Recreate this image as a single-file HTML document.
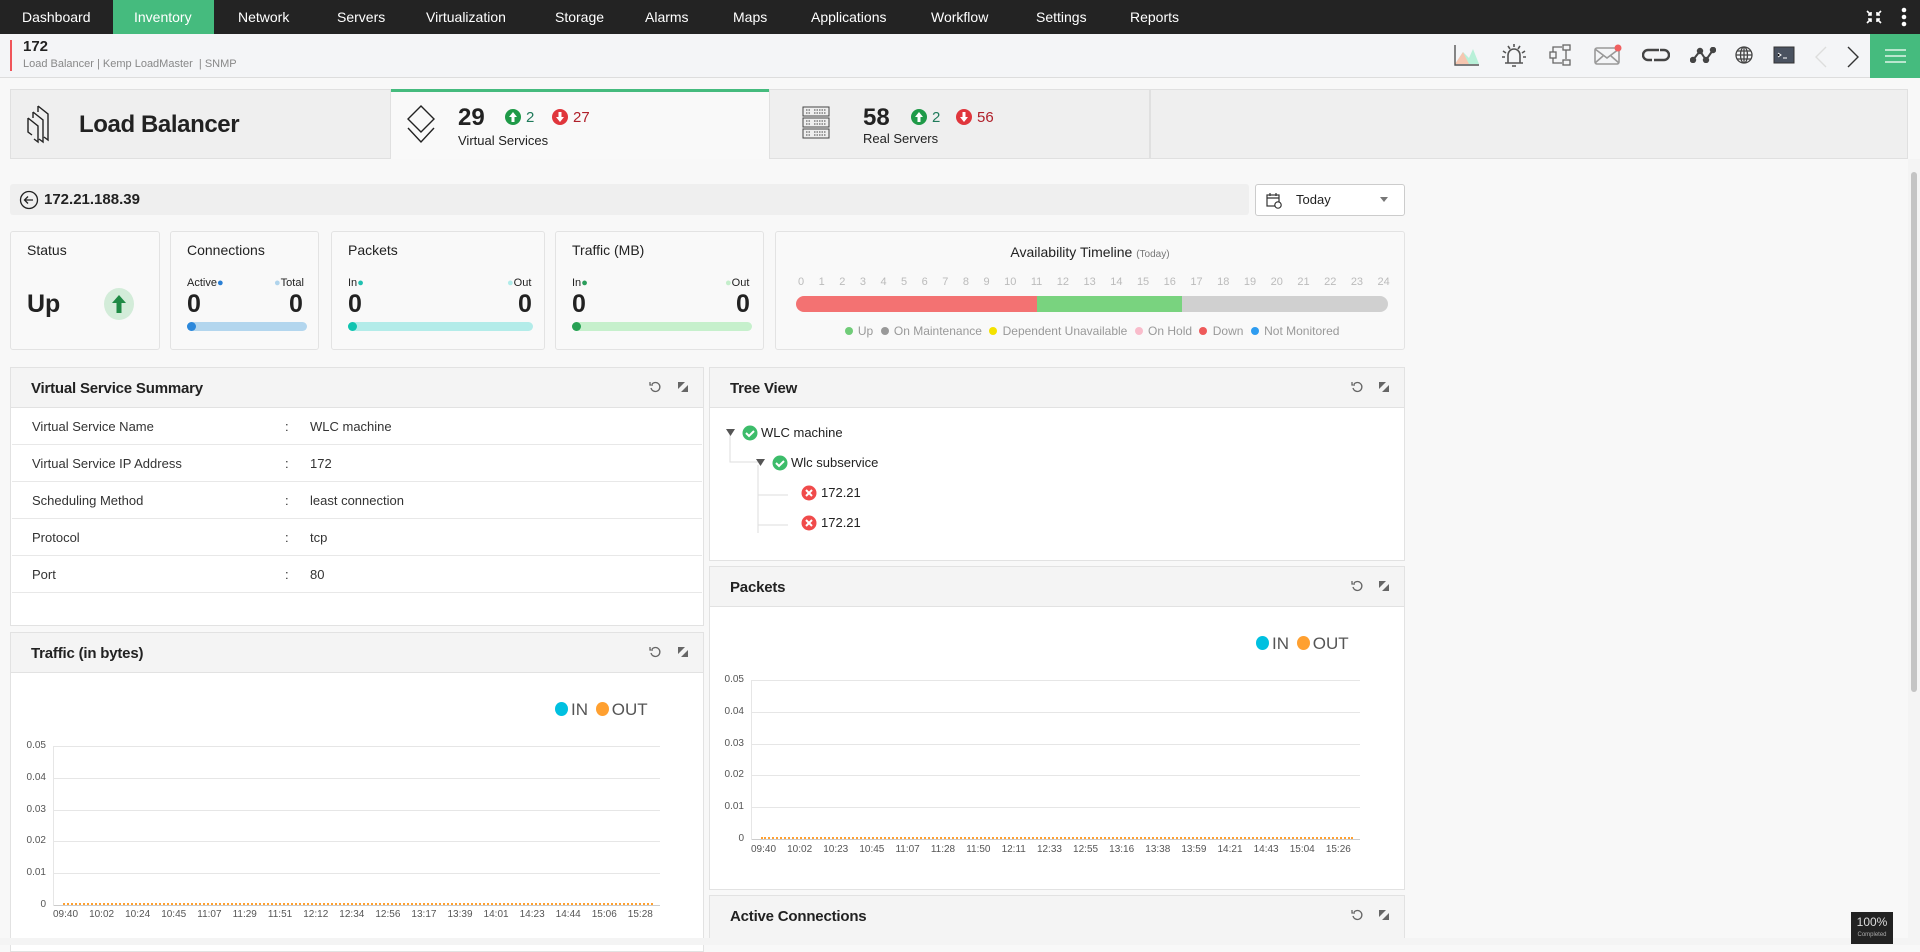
<!DOCTYPE html>
<html><head><meta charset="utf-8"><style>
*{box-sizing:border-box;margin:0;padding:0}
body{width:1920px;height:945px;overflow:hidden;background:#f8f8f8;font-family:"Liberation Sans",sans-serif;color:#222;position:relative}
.a{position:absolute}
.nav{left:0;top:0;width:1920px;height:34px;background:#232323}
.nav span{position:absolute;top:0;height:34px;line-height:34px;color:#fff;font-size:14px}
.sub{left:0;top:34px;width:1920px;height:44px;background:#f4f5f7;border-bottom:1px solid #ddd}
.box{background:#f9f9f9;border:1px solid #e3e3e3;border-radius:3px}
.ph{background:#f4f4f4;border:1px solid #e2e2e2}
.pt{position:absolute;left:20px;top:12px;font-size:15px;font-weight:bold;color:#222;letter-spacing:-0.2px}
.pico{position:absolute;top:13px;width:12px;height:12px}
.row{position:absolute;left:2px;right:2px;height:37px;border-bottom:1px solid #e8e8e8;font-size:13px;line-height:37px;color:#333}
.yl{position:absolute;font-size:10px;color:#555;text-align:right;width:30px}
.xl{position:absolute;font-size:10px;color:#555}
.gl{position:absolute;height:1px;background:#e6e6e6}
.dot{display:inline-block;border-radius:50%;vertical-align:middle}
.lg .dot{width:13px;height:14px;margin:0 3px 3px 0}
.al .dot{width:8px;height:8px;margin:0 2px 2px 4px}
</style></head><body>
<div class="a nav">
<span style="left:22px">Dashboard</span>
<div class="a" style="left:113px;top:0;width:101px;height:34px;background:#45bb7e"></div>
<span style="left:134px">Inventory</span>
<span style="left:238px">Network</span>
<span style="left:337px">Servers</span>
<span style="left:426px">Virtualization</span>
<span style="left:555px">Storage</span>
<span style="left:645px">Alarms</span>
<span style="left:733px">Maps</span>
<span style="left:811px">Applications</span>
<span style="left:931px">Workflow</span>
<span style="left:1036px">Settings</span>
<span style="left:1130px">Reports</span>
<svg class="a" style="left:1866px;top:10px" width="16" height="14" viewBox="0 0 16 14" stroke="#fff" stroke-width="1.6" fill="none"><path d="M1 1l4 4M5 2v3H2M15 1l-4 4M11 2v3h3M1 13l4-4M2 9h3v3M15 13l-4-4M14 9h-3v3"/></svg>
<svg class="a" style="left:1900px;top:7px" width="8" height="20"><circle cx="4" cy="3" r="2.3" fill="#fff"/><circle cx="4" cy="10" r="2.3" fill="#fff"/><circle cx="4" cy="17" r="2.3" fill="#fff"/></svg>
</div>
<div class="a sub">
<div class="a" style="left:10px;top:6px;width:2px;height:31px;background:#f0555a"></div>
<div class="a" style="left:23px;top:4px;font-size:15px;font-weight:bold">172</div>
<div class="a" style="left:23px;top:24px;font-size:11px;color:#888">Load Balancer | Kemp LoadMaster &nbsp;| SNMP</div>
<svg class="a" style="left:1454px;top:10px" width="26" height="22"><path d="M1 20L9 8l6 6 4-9 6 15z" fill="#b8f0d8"/><path d="M1 20L9 8l6 12z" fill="#f6c6b0"/><path d="M1 1v20h24" stroke="#555" stroke-width="1.4" fill="none"/></svg>
<svg class="a" style="left:1500px;top:9px" width="28" height="26" stroke="#555" stroke-width="1.6" fill="none"><path d="M8 20V12a6 6 0 0112 0v8M5 20h18M12 23h4M3 8l3 2M25 8l-3 2M2 14h3M23 14h3M8 3l2 3M20 3l-2 3M14 1v3"/></svg>
<svg class="a" style="left:1549px;top:10px" width="22" height="22" stroke="#666" stroke-width="1.3" fill="none"><rect x="1" y="8" width="6" height="6"/><rect x="14" y="1" width="7" height="5"/><rect x="14" y="16" width="7" height="5"/><path d="M4 8V3h9M4 14v5h9M17 6v9"/></svg>
<svg class="a" style="left:1594px;top:10px" width="28" height="22" stroke="#999" stroke-width="1.6" fill="none"><rect x="1" y="4" width="24" height="16" rx="2"/><path d="M1 5l12 9 12-9M1 19l8-7M25 19l-8-7"/><circle cx="24" cy="4" r="3.5" fill="#f06060" stroke="none"/></svg>
<svg class="a" style="left:1642px;top:14px" width="28" height="14" stroke="#444" stroke-width="2.4" fill="none"><path d="M10 2H6a5 5 0 000 10h4M18 12h4a5 5 0 000-10h-4M9 2h8M12 12h8"/></svg>
<svg class="a" style="left:1690px;top:13px" width="26" height="16" stroke="#444" stroke-width="2" fill="#444"><path d="M3 13l7-9 6 9 7-10" fill="none"/><circle cx="3" cy="13" r="2.2"/><circle cx="10" cy="4" r="2.2"/><circle cx="16" cy="13" r="2.2"/><circle cx="23" cy="3" r="2.2"/></svg>
<svg class="a" style="left:1735px;top:12px" width="18" height="18" stroke="#444" stroke-width="1.3" fill="none"><circle cx="9" cy="9" r="8"/><ellipse cx="9" cy="9" rx="3.5" ry="8"/><path d="M1 9h16M2 5h14M2 13h14M9 1v16"/></svg>
<svg class="a" style="left:1773px;top:12px" width="22" height="18"><rect x="1" y="1" width="20" height="16" fill="#4a5260" stroke="#333"/><path d="M5 7l3 2-3 2M10 12h4" stroke="#fff" stroke-width="1"/></svg>
<svg class="a" style="left:1815px;top:12px" width="12" height="22" stroke="#ddd" stroke-width="1.4" fill="none"><path d="M11 1L1 11l10 10"/></svg>
<svg class="a" style="left:1847px;top:12px" width="12" height="22" stroke="#333" stroke-width="1.4" fill="none"><path d="M1 1l10 10L1 21"/></svg>
<div class="a" style="left:1870px;top:0;width:50px;height:44px;background:#45bb7e"></div>
<svg class="a" style="left:1885px;top:15px" width="21" height="14" stroke="#fff" stroke-width="1.3"><path d="M0 1h21M0 7h21M0 13h21"/></svg>
</div>

<!-- tabs -->
<div class="a" style="left:10px;top:89px;width:381px;height:70px;background:#efefef;border:1px solid #e0e0e0"></div>
<svg class="a" style="left:26px;top:104px" width="34" height="40" stroke="#222" stroke-width="1.4" fill="none"><path d="M12 2l10 8v26l-4-3M7 8l10 8v22l-4-3M2 14l10 8v16L8 35M2 14v14l4 3M12 2v6M7 8v6"/></svg>
<div class="a" style="left:79px;top:111px;font-size:24px;font-weight:bold;color:#222;letter-spacing:-0.4px">Load Balancer</div>
<div class="a" style="left:391px;top:89px;width:378px;height:70px;background:#f9f9f9;border-top:3px solid #45bb7e"></div>
<svg class="a" style="left:406px;top:104px" width="30" height="42" stroke="#222" stroke-width="1.4" fill="none"><path d="M15 2l13 13-13 13L2 15zM2 24l13 14 13-14"/></svg>
<div class="a" style="left:458px;top:104px;font-size:24px;font-weight:bold">29</div>
<svg class="a" style="left:505px;top:109px" width="16" height="16"><circle cx="8" cy="8" r="8" fill="#1f9a48"/><path d="M8 3l4 5H9.5v5h-3V8H4z" fill="#fff"/></svg>
<div class="a" style="left:526px;top:109px;font-size:15px;color:#1f7a5a">2</div>
<svg class="a" style="left:552px;top:109px" width="16" height="16"><circle cx="8" cy="8" r="8" fill="#e0363c"/><path d="M8 13l4-5H9.5V3h-3v5H4z" fill="#fff"/></svg>
<div class="a" style="left:573px;top:109px;font-size:15px;color:#b0202a">27</div>
<div class="a" style="left:458px;top:133px;font-size:13px">Virtual Services</div>
<div class="a" style="left:769px;top:89px;width:381px;height:70px;background:#efefef;border:1px solid #e0e0e0"></div>
<svg class="a" style="left:802px;top:106px" width="28" height="34" stroke="#444" stroke-width="1" fill="none"><rect x="1" y="1" width="26" height="9"/><rect x="1" y="12" width="26" height="9"/><rect x="1" y="23" width="26" height="9"/><path d="M4 4h4M4 7h4M4 15h4M4 18h4M4 26h4M4 29h4M12 4h12M12 7h12M12 15h12M12 18h12M12 26h12M12 29h12" stroke-dasharray="1.5 1"/></svg>
<div class="a" style="left:863px;top:104px;font-size:24px;font-weight:bold">58</div>
<svg class="a" style="left:911px;top:109px" width="16" height="16"><circle cx="8" cy="8" r="8" fill="#1f9a48"/><path d="M8 3l4 5H9.5v5h-3V8H4z" fill="#fff"/></svg>
<div class="a" style="left:932px;top:109px;font-size:15px;color:#1f7a5a">2</div>
<svg class="a" style="left:956px;top:109px" width="16" height="16"><circle cx="8" cy="8" r="8" fill="#e0363c"/><path d="M8 13l4-5H9.5V3h-3v5H4z" fill="#fff"/></svg>
<div class="a" style="left:977px;top:109px;font-size:15px;color:#b0202a">56</div>
<div class="a" style="left:863px;top:131px;font-size:13px">Real Servers</div>
<div class="a" style="left:1150px;top:89px;width:758px;height:70px;background:#efefef;border:1px solid #e0e0e0"></div>

<!-- scrollbar -->
<div class="a" style="left:1908px;top:159px;width:12px;height:786px;background:#f4f4f4"></div>
<div class="a" style="left:1911px;top:172px;width:6px;height:520px;background:#c4c4c4;border-radius:3px"></div>

<!-- ip bar -->
<div class="a" style="left:10px;top:184px;width:1239px;height:31px;background:#efefef;border-radius:3px"></div>
<svg class="a" style="left:19px;top:190px" width="20" height="20" stroke="#222" stroke-width="1.3" fill="none"><circle cx="10" cy="10" r="8.5"/><path d="M14 10H6M9 6.5L5.5 10 9 13.5"/></svg>
<div class="a" style="left:44px;top:191px;font-size:15px;font-weight:bold">172.21.188.39</div>
<div class="a" style="left:1255px;top:184px;width:150px;height:32px;background:#fff;border:1px solid #ccc;border-radius:3px"></div>
<svg class="a" style="left:1266px;top:193px" width="16" height="16" stroke="#333" stroke-width="1.2" fill="none"><rect x="1" y="2" width="12" height="11"/><path d="M1 5h12M4 0v3M10 0v3"/><circle cx="12" cy="12" r="3.2" fill="#fff"/></svg>
<div class="a" style="left:1296px;top:192px;font-size:13px">Today</div>
<div class="a" style="left:1380px;top:197px;border:4px solid transparent;border-top:5px solid #777"></div>

<!-- widgets -->
<div class="a box" style="left:10px;top:231px;width:150px;height:119px"></div>
<div class="a" style="left:27px;top:242px;font-size:14px">Status</div>
<div class="a" style="left:27px;top:290px;font-size:25px;font-weight:bold">Up</div>
<svg class="a" style="left:104px;top:288px" width="30" height="32"><ellipse cx="15" cy="16" rx="15" ry="16" fill="#d3ecd9"/><path d="M15 7l7 8h-4.5v10h-5V15H8z" fill="#1f8a45"/></svg>

<div class="a box" style="left:170px;top:231px;width:149px;height:119px"></div>
<div class="a" style="left:187px;top:242px;font-size:14px">Connections</div>
<div class="a" style="left:187px;top:277px;font-size:11px">Active<span style="color:#2a7fd4">●</span></div>
<div class="a" style="left:274px;top:277px;font-size:11px"><span style="color:#b0d4ec">●</span>Total</div>
<div class="a" style="left:187px;top:290px;font-size:25px;font-weight:bold">0</div>
<div class="a" style="left:289px;top:290px;font-size:25px;font-weight:bold">0</div>
<div class="a" style="left:187px;top:322px;width:120px;height:9px;background:#b3d6ee;border-radius:5px"></div>
<div class="a" style="left:187px;top:322px;width:9px;height:9px;background:#2c88db;border-radius:5px"></div>

<div class="a box" style="left:331px;top:231px;width:214px;height:119px"></div>
<div class="a" style="left:348px;top:242px;font-size:14px">Packets</div>
<div class="a" style="left:348px;top:277px;font-size:11px">In<span style="color:#20c0b0">●</span></div>
<div class="a" style="left:507px;top:277px;font-size:11px"><span style="color:#b0ecea">●</span>Out</div>
<div class="a" style="left:348px;top:290px;font-size:25px;font-weight:bold">0</div>
<div class="a" style="left:518px;top:290px;font-size:25px;font-weight:bold">0</div>
<div class="a" style="left:348px;top:322px;width:185px;height:9px;background:#b3ece9;border-radius:5px"></div>
<div class="a" style="left:348px;top:322px;width:9px;height:9px;background:#10c4b0;border-radius:5px"></div>

<div class="a box" style="left:555px;top:231px;width:209px;height:119px"></div>
<div class="a" style="left:572px;top:242px;font-size:14px">Traffic (MB)</div>
<div class="a" style="left:572px;top:277px;font-size:11px">In<span style="color:#2a9d5a">●</span></div>
<div class="a" style="left:725px;top:277px;font-size:11px"><span style="color:#c4eecb">●</span>Out</div>
<div class="a" style="left:572px;top:290px;font-size:25px;font-weight:bold">0</div>
<div class="a" style="left:736px;top:290px;font-size:25px;font-weight:bold">0</div>
<div class="a" style="left:572px;top:322px;width:180px;height:9px;background:#c6f0cc;border-radius:5px"></div>
<div class="a" style="left:572px;top:322px;width:9px;height:9px;background:#27a054;border-radius:5px"></div>

<div class="a box" style="left:775px;top:231px;width:630px;height:119px"></div>
<div class="a" style="left:775px;top:244px;width:630px;text-align:center;font-size:14px">Availability Timeline <span style="font-size:10px;color:#777">(Today)</span></div>
<div class="a" style="left:798px;top:276px;width:592px;font-size:11px;color:#bbb;display:flex;justify-content:space-between"><span>0</span><span>1</span><span>2</span><span>3</span><span>4</span><span>5</span><span>6</span><span>7</span><span>8</span><span>9</span><span>10</span><span>11</span><span>12</span><span>13</span><span>14</span><span>15</span><span>16</span><span>17</span><span>18</span><span>19</span><span>20</span><span>21</span><span>22</span><span>23</span><span>24</span></div>
<div class="a" style="left:796px;top:296px;width:592px;height:16px;border-radius:8px;background:linear-gradient(90deg,#f37272 0,#f37272 241px,#79d37f 241px,#79d37f 386px,#d0d0d0 386px)"></div>
<div class="a al" style="left:775px;top:324px;width:630px;text-align:center;font-size:12px;color:#999"><span class="dot" style="background:#70cc78"></span> Up <span class="dot" style="background:#999"></span> On Maintenance <span class="dot" style="background:#f4e200"></span> Dependent Unavailable <span class="dot" style="background:#f9bccb"></span> On Hold <span class="dot" style="background:#ee5a5a"></span> Down <span class="dot" style="background:#2e9cf0"></span> Not Monitored</div>

<!-- VSS panel -->
<div class="a" style="left:10px;top:367px;width:694px;height:259px;background:#fff;border:1px solid #e2e2e2"></div>
<div class="a ph" style="left:10px;top:367px;width:694px;height:41px"><div class="pt">Virtual Service Summary</div>
<svg class="pico" style="left:638px" viewBox="0 0 12 12" stroke="#666" stroke-width="1.3" fill="none"><path d="M3 3a4.5 4.5 0 11-1 4M1 1v3h3"/></svg>
<svg class="pico" style="left:666px" viewBox="0 0 12 12"><path d="M1 1h7L1 8zM11 11H4l7-7z" fill="#666"/></svg></div>
<div class="a" style="left:10px;top:408px;width:694px;height:218px">
<div class="row" style="top:0">
<span class="a" style="left:20px">Virtual Service Name</span><span class="a" style="left:273px">:</span><span class="a" style="left:298px">WLC machine</span></div>
<div class="row" style="top:37px"><span class="a" style="left:20px">Virtual Service IP Address</span><span class="a" style="left:273px">:</span><span class="a" style="left:298px">172</span></div>
<div class="row" style="top:74px"><span class="a" style="left:20px">Scheduling Method</span><span class="a" style="left:273px">:</span><span class="a" style="left:298px">least connection</span></div>
<div class="row" style="top:111px"><span class="a" style="left:20px">Protocol</span><span class="a" style="left:273px">:</span><span class="a" style="left:298px">tcp</span></div>
<div class="row" style="top:148px"><span class="a" style="left:20px">Port</span><span class="a" style="left:273px">:</span><span class="a" style="left:298px">80</span></div>
</div>

<!-- Traffic panel -->
<div class="a" style="left:10px;top:632px;width:694px;height:320px;background:#fff;border:1px solid #e2e2e2"></div>
<div class="a ph" style="left:10px;top:632px;width:694px;height:41px"><div class="pt">Traffic (in bytes)</div>
<svg class="pico" style="left:638px" viewBox="0 0 12 12" stroke="#666" stroke-width="1.3" fill="none"><path d="M3 3a4.5 4.5 0 11-1 4M1 1v3h3"/></svg>
<svg class="pico" style="left:666px" viewBox="0 0 12 12"><path d="M1 1h7L1 8zM11 11H4l7-7z" fill="#666"/></svg></div>
<div class="a lg" style="left:555px;top:700px;font-size:17px;color:#555"><span class="dot" style="background:#00c0e0"></span>IN <span class="dot" style="background:#ffa030;margin-left:3px"></span>OUT</div>
<div class="yl" style="left:16px;top:740px">0.05</div><div class="gl" style="left:53px;top:746px;width:607px"></div>
<div class="yl" style="left:16px;top:772px">0.04</div><div class="gl" style="left:53px;top:778px;width:607px"></div>
<div class="yl" style="left:16px;top:804px">0.03</div><div class="gl" style="left:53px;top:810px;width:607px"></div>
<div class="yl" style="left:16px;top:835px">0.02</div><div class="gl" style="left:53px;top:841px;width:607px"></div>
<div class="yl" style="left:16px;top:867px">0.01</div><div class="gl" style="left:53px;top:873px;width:607px"></div>
<div class="yl" style="left:16px;top:899px">0</div><div class="gl" style="left:53px;top:905px;width:607px;background:#ccc"></div>
<div class="a" style="left:53px;top:746px;width:1px;height:160px;background:#e6e6e6"></div>
<div class="a" style="left:63px;top:903px;width:590px;border-top:2px dotted #ffa030"></div>
<div class="a" style="left:53px;top:909px;width:600px;display:flex;justify-content:space-between;font-size:10px;color:#555"><span>09:40</span><span>10:02</span><span>10:24</span><span>10:45</span><span>11:07</span><span>11:29</span><span>11:51</span><span>12:12</span><span>12:34</span><span>12:56</span><span>13:17</span><span>13:39</span><span>14:01</span><span>14:23</span><span>14:44</span><span>15:06</span><span>15:28</span></div>

<!-- Tree view -->
<div class="a" style="left:709px;top:367px;width:696px;height:194px;background:#fff;border:1px solid #e2e2e2"></div>
<div class="a ph" style="left:709px;top:367px;width:696px;height:41px"><div class="pt">Tree View</div>
<svg class="pico" style="left:641px" viewBox="0 0 12 12" stroke="#666" stroke-width="1.3" fill="none"><path d="M3 3a4.5 4.5 0 11-1 4M1 1v3h3"/></svg>
<svg class="pico" style="left:668px" viewBox="0 0 12 12"><path d="M1 1h7L1 8zM11 11H4l7-7z" fill="#666"/></svg></div>
<svg class="a" style="left:720px;top:420px" width="200" height="130" fill="none">
<path d="M10 12v30h28M38 45v68M38 75h30M38 105h30" stroke="#ddd"/>
<path d="M6 9h9l-4.5 7z" fill="#555"/>
<circle cx="30" cy="13" r="7.5" fill="#3cbc6a"/><path d="M26 13l3 3 5-5" stroke="#fff" stroke-width="2"/>
<path d="M36 39h9l-4.5 7z" fill="#555"/>
<circle cx="60" cy="43" r="7.5" fill="#3cbc6a"/><path d="M56 43l3 3 5-5" stroke="#fff" stroke-width="2"/>
<circle cx="89" cy="73" r="7.5" fill="#f04b4b"/><path d="M86 70l6 6M92 70l-6 6" stroke="#fff" stroke-width="2"/>
<circle cx="89" cy="103" r="7.5" fill="#f04b4b"/><path d="M86 100l6 6M92 100l-6 6" stroke="#fff" stroke-width="2"/>
</svg>
<div class="a" style="left:761px;top:425px;font-size:13px">WLC machine</div>
<div class="a" style="left:791px;top:455px;font-size:13px">Wlc subservice</div>
<div class="a" style="left:821px;top:485px;font-size:13px">172.21</div>
<div class="a" style="left:821px;top:515px;font-size:13px">172.21</div>

<!-- Packets -->
<div class="a" style="left:709px;top:566px;width:696px;height:324px;background:#fff;border:1px solid #e2e2e2"></div>
<div class="a ph" style="left:709px;top:566px;width:696px;height:41px"><div class="pt">Packets</div>
<svg class="pico" style="left:641px" viewBox="0 0 12 12" stroke="#666" stroke-width="1.3" fill="none"><path d="M3 3a4.5 4.5 0 11-1 4M1 1v3h3"/></svg>
<svg class="pico" style="left:668px" viewBox="0 0 12 12"><path d="M1 1h7L1 8zM11 11H4l7-7z" fill="#666"/></svg></div>
<div class="a lg" style="left:1256px;top:634px;font-size:17px;color:#555"><span class="dot" style="background:#00c0e0"></span>IN <span class="dot" style="background:#ffa030;margin-left:3px"></span>OUT</div>
<div class="yl" style="left:714px;top:674px">0.05</div><div class="gl" style="left:751px;top:680px;width:609px"></div>
<div class="yl" style="left:714px;top:706px">0.04</div><div class="gl" style="left:751px;top:712px;width:609px"></div>
<div class="yl" style="left:714px;top:738px">0.03</div><div class="gl" style="left:751px;top:744px;width:609px"></div>
<div class="yl" style="left:714px;top:769px">0.02</div><div class="gl" style="left:751px;top:775px;width:609px"></div>
<div class="yl" style="left:714px;top:801px">0.01</div><div class="gl" style="left:751px;top:807px;width:609px"></div>
<div class="yl" style="left:714px;top:833px">0</div><div class="gl" style="left:751px;top:839px;width:609px;background:#ccc"></div>
<div class="a" style="left:751px;top:680px;width:1px;height:160px;background:#e6e6e6"></div>
<div class="a" style="left:761px;top:837px;width:592px;border-top:2px dotted #ffa030"></div>
<div class="a" style="left:751px;top:844px;width:600px;display:flex;justify-content:space-between;font-size:10px;color:#555"><span>09:40</span><span>10:02</span><span>10:23</span><span>10:45</span><span>11:07</span><span>11:28</span><span>11:50</span><span>12:11</span><span>12:33</span><span>12:55</span><span>13:16</span><span>13:38</span><span>13:59</span><span>14:21</span><span>14:43</span><span>15:04</span><span>15:26</span></div>

<!-- Active connections -->
<div class="a ph" style="left:709px;top:895px;width:696px;height:50px"><div class="pt">Active Connections</div>
<svg class="pico" style="left:641px" viewBox="0 0 12 12" stroke="#666" stroke-width="1.3" fill="none"><path d="M3 3a4.5 4.5 0 11-1 4M1 1v3h3"/></svg>
<svg class="pico" style="left:668px" viewBox="0 0 12 12"><path d="M1 1h7L1 8zM11 11H4l7-7z" fill="#666"/></svg></div>
<div class="a" style="left:0;top:938px;width:1908px;height:7px;background:#f4f4f4"></div>
<div class="a" style="left:1851px;top:912px;width:42px;height:32px;background:#222;color:#ddd;font-size:12px;text-align:center;line-height:20px">100%<div style="font-size:6px;line-height:6px;color:#aaa">Completed</div></div>
</body></html>
